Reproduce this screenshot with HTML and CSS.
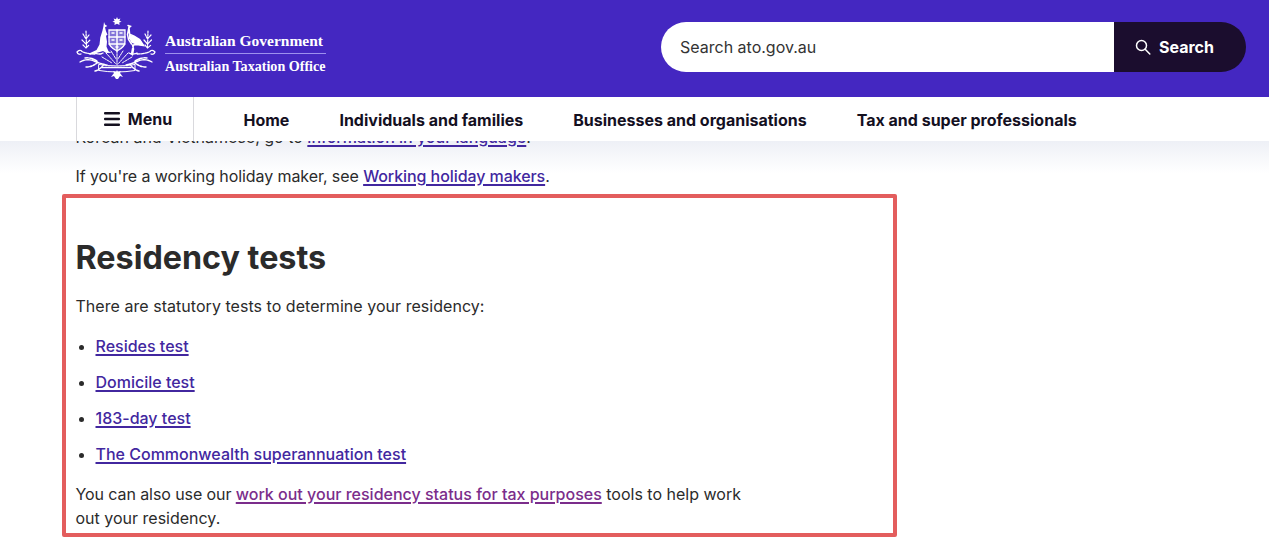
FILE: index.html
```html
<!DOCTYPE html>
<html lang="en">
<head>
<meta charset="utf-8">
<title>Residency tests</title>
<link rel="stylesheet" href="styles.css">
</head>
<body>
<header class="site-header">
  <div class="banner">
    <a class="brand" href="#">
      <svg class="crest" width="84" height="62" viewBox="0 0 84 62" fill="none" stroke="#fff" stroke-width="1" stroke-linecap="round">
        <path d="M41 0l1 2.300 2.400-.8-1 2.300 2.200 1-2.400.8.400 2.400-2.600-1.200-2.600 1.200.4-2.400-2.400-.8 2.200-1-1-2.300 2.400.8z" fill="#fff" stroke="none"/>
        <path d="M33 13h16v12q0 5-8 9-8-4-8-9z" fill="#8375d8" stroke-width="1.300"/>
        <path d="M41 13v21M33 20h16M33 27h16M36 16h2M44 16h2M36 23h2M44 23h2M40 30h2" stroke-width="1.500"/>
        <path d="M28 5l1 2.500 2.300 1.500-2.300 1.300 1 4 1.500 3.500-1.500 1 1 6-.5 5 2 4.500 3 1.500-5 .3-3.500-2-4 1.200-9 2.400-1.500-1 8-3.600 3-5.500.8-7 2.200-7 1-4.500z" fill="#fff" stroke="none"/>
        <path d="M52 8.500l2.500.8-1.500 1.500.6 6.500 4.500 1.800 5.500 3.500 4 6-7-1-3 .3-1 3.500-1 5.500M56.500 28l1 4-1 6M53 10l-1.500 7.500 1 5 3 4.500" stroke-width="1.500"/>
        <path d="M53 17.500l5.500 1.800 5.500 3.500 4 6-7.500-1-5-2-2.500-4.500z" fill="#fff" stroke="none"/>
        <path d="M10 14l.5 16M7 17l3 5 3-4M6 23l4 4 4-4M7 28l3 3 3-3M72 14l-.5 16M69 17l2.500 5 3.500-4M68 23l3.500 4 4-4M69 28l2.500 3 3.500-3" stroke-width="1.200" stroke-dasharray="2 1"/>
        <path d="M1 35q3-3 5-.5 5 2.500 13 2.500M1 35q1 3 4 2M79 35q-3-3-5-.5-5 2.500-13 2.500M79 35q-1 3-4 2M19 36q4 2 8 0M61 36q-4 2-8 0" stroke-width="1.300" stroke-dasharray="3 1"/>
        <path d="M4 45q7-4 14-1t13 4M76 45q-7-4-14-1t-12 4M9 41q6-1 12 3M71 41q-6-1-12 3M10 50q7 0 12-5M70 50q-7 0-12-5M19 54q5-1 9-7M63 54q-5-1-9-7" stroke-width="1.400" stroke-dasharray="2.500 1"/>
        <path d="M23 47.500q18 3 36 0v6q-18 3-36 0z" stroke-width="1"/>
        <path d="M26 50.500h30" stroke-width="1.500" stroke-dasharray="2 1"/>
        <path d="M41 34v14M30 36l10 11M52 36l-10 11M35 34l5 8M47 34l-5 8M26 40l10 6M56 40l-10 6" stroke-width="1" stroke-dasharray="2 1"/>
        <path d="M35 60l3-4-1-2 3 1 1-2 1 2 3-1-1 2 3 4-3-1-2 3h-2l-2-3z" fill="#fff" stroke="none"/>
      </svg>
      <span class="agency">
        <span class="agency-gov">Australian Government</span>
        <span class="agency-ato">Australian Taxation Office</span>
      </span>
    </a>
    <form class="search">
      <span class="search-input">Search ato.gov.au</span>
      <button class="search-btn" type="button">
        <svg width="16" height="16" viewBox="0 0 16 16" fill="none" stroke="#fff" stroke-width="1.500" stroke-linecap="round"><circle cx="6.500" cy="6.500" r="5"/><path d="M10.200 10.200L14.800 15"/></svg>
        Search
      </button>
    </form>
  </div>
  <nav class="mainnav">
    <button class="menu-btn" type="button">
      <svg width="17" height="16" viewBox="0 0 17 16" fill="#14101f"><rect x="0" y="1" width="16" height="2.600" rx="1"/><rect x="0" y="6.700" width="16" height="2.600" rx="1"/><rect x="0" y="12.400" width="16" height="2.600" rx="1"/></svg>
      Menu
    </button>
    <ul class="navlist">
      <li><a href="#">Home</a></li>
      <li><a href="#">Individuals and families</a></li>
      <li><a href="#">Businesses and organisations</a></li>
      <li><a href="#">Tax and super professionals</a></li>
    </ul>
  </nav>
</header>
<main class="content">
  <p class="para">Korean and Vietnamese, go to <a class="link" href="#">information in your language</a>.</p>
  <p class="para para-holiday">If you're a working holiday maker, see <a class="link" href="#">Working holiday makers</a>.</p>
  <section class="highlight">
    <h2 class="title">Residency tests</h2>
    <p class="para para-spaced">There are statutory tests to determine your residency:</p>
    <ul class="tests">
      <li><a class="link" href="#">Resides test</a></li>
      <li><a class="link" href="#">Domicile test</a></li>
      <li><a class="link" href="#">183-day test</a></li>
      <li><a class="link" href="#">The Commonwealth superannuation test</a></li>
    </ul>
    <p class="para para-last"><span class="lead-in">You can also use our </span><a class="link link-visited" href="#">work out your residency status for tax purposes</a> tools to help work out your residency.</p>
  </section>
</main>
</body>
</html>
```
FILE: styles.css
```css
* { box-sizing: border-box; }
html, body { margin: 0; padding: 0; }
body {
  font-family: Inter, "Liberation Sans", sans-serif;
  font-size: 16px;
  line-height: 24px;
  color: #2b2b2b;
  background: #fff;
  height: 540px;
  overflow: hidden;
}
.site-header {
  position: absolute;
  top: 0;
  left: 0;
  right: 0;
  z-index: 2;
}
.banner {
  height: 97px;
  background: #4427c1;
  display: flex;
  align-items: flex-start;
  justify-content: space-between;
  padding: 17px 23px 0 76px;
}
.brand {
  display: flex;
  align-items: flex-start;
  gap: 5px;
  color: #fff;
  text-decoration: none;
}
.crest { display: block; flex: none; }
.agency {
  display: flex;
  flex-direction: column;
  font-family: "Liberation Serif", serif;
  font-weight: 700;
  line-height: 17px;
  white-space: nowrap;
  margin-top: 15px;
}
.agency-gov {
  font-size: 15.500px;
  border-bottom: 1px solid #9d90ee;
  padding-bottom: 4px;
  margin-bottom: 4px;
}
.agency-ato { font-size: 14.100px; }
.search {
  display: flex;
  width: 585px;
  height: 50px;
  border-radius: 25px;
  overflow: hidden;
  margin-top: 5px;
}
.search-input {
  flex: 1;
  background: #fff;
  color: #333;
  padding-left: 19px;
  line-height: 50px;
  font-size: 16px;
}
.search-btn {
  width: 132px;
  border: 0;
  background: #1b0d2e;
  color: #fff;
  font: 700 16px Inter, "Liberation Sans", sans-serif;
  display: flex;
  align-items: center;
  gap: 8px;
  padding: 0 0 0 21px;
}
.mainnav {
  height: 44px;
  background: #fff;
  display: flex;
  align-items: center;
  padding-left: 76px;
}
.menu-btn {
  width: 118px;
  height: 44px;
  background: #fff;
  border: solid #d9d9dd;
  border-width: 0 1px;
  display: flex;
  align-items: center;
  justify-content: center;
  gap: 7px;
  font: 700 16px Inter, "Liberation Sans", sans-serif;
  color: #14101f;
  padding: 0 0 0 6px;
}
.navlist {
  list-style: none;
  display: flex;
  gap: 50px;
  margin: 2px 0 0 49.500px;
  padding: 0;
}
.navlist a {
  color: #14101f;
  font-weight: 700;
  text-decoration: none;
  white-space: nowrap;
}
.content {
  padding: 125px 0 0 75.500px;
  background: linear-gradient(#eef0f6, #fff) no-repeat 0 141px / 100% 32px;
}
.para {
  margin: 0;
  max-width: 680px;
}
.para-holiday {
  margin-top: 15px;
  letter-spacing: -0.080px;
}
.link {
  color: #42279f;
  font-weight: 500;
  text-decoration: underline;
  text-decoration-thickness: 1.500px;
  text-underline-offset: 2px;
}
.link-visited { color: #7b2d8b; }
.highlight {
  width: 835px;
  height: 343px;
  margin: 6px 0 0 -13.500px;
  padding: 40px 9px 0 9.500px;
  border: 4px solid #e35d5d;
  border-radius: 2px;
}
.title {
  margin: 0 0 16px;
  font-size: 32.300px;
  line-height: 40px;
  font-weight: 700;
  color: #2b2b2b;
}
.para-spaced { letter-spacing: 0.040px; }
.tests {
  margin: 16px 0 0;
  padding: 0 0 0 20px;
}
.tests li { margin-bottom: 12px; }
.para-last { margin-top: 16px; }
.lead-in { letter-spacing: -0.090px; }
```
